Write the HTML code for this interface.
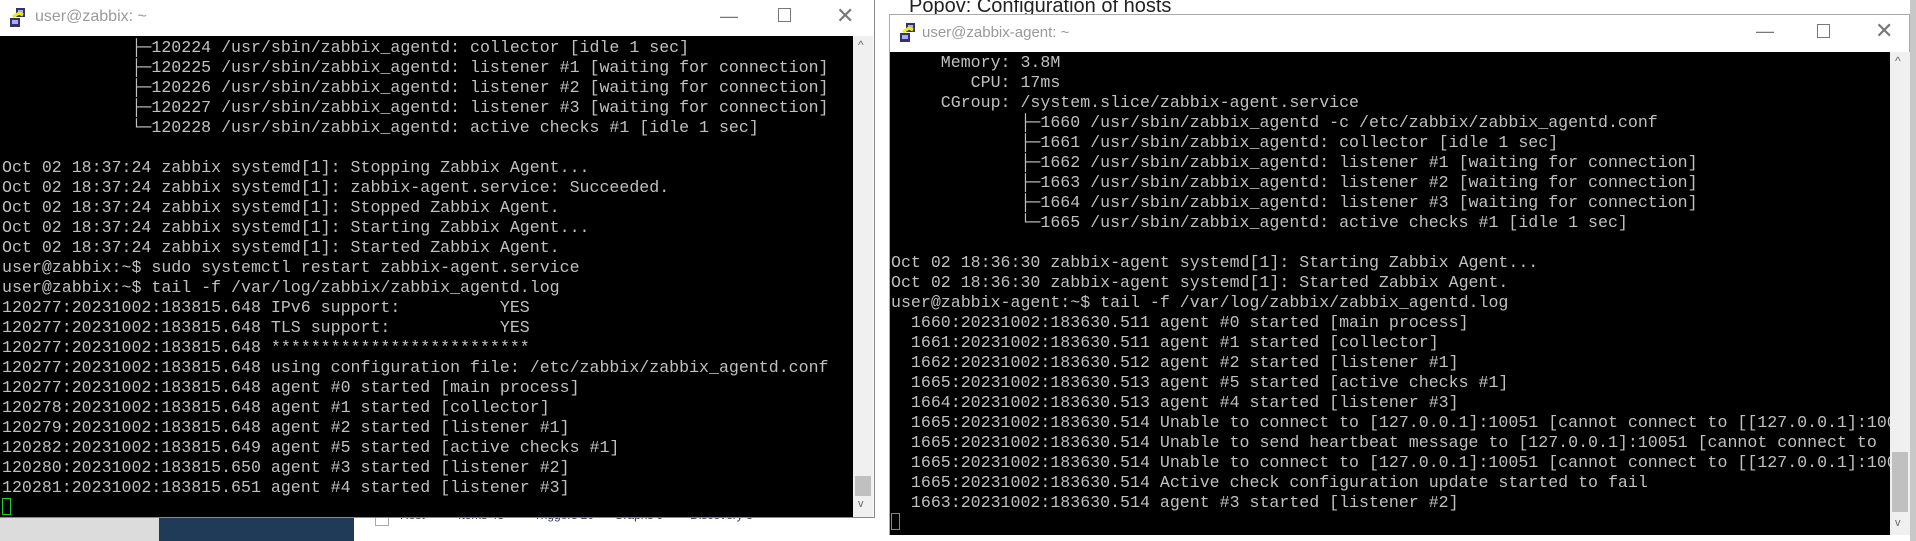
<!DOCTYPE html>
<html><head><meta charset="utf-8"><style>
*{margin:0;padding:0;box-sizing:border-box}
body{width:1916px;height:541px;overflow:hidden;background:#f0f0f0;position:relative;font-family:"Liberation Sans",sans-serif}
.win{position:absolute;background:#fff;border:1px solid #888}
.title{position:absolute;left:0;right:0;top:0;height:36px;background:#fff}
.title .t{position:absolute;left:35px;top:8px;font-size:16px;color:#999}
.icon{position:absolute;left:9px;top:7px;width:20px;height:22px}
.ctl{position:absolute;top:6px;font-size:18px;color:#777}
.term{position:absolute;background:#000;overflow:hidden}
pre{position:absolute;font-family:"Liberation Mono",monospace;font-size:16.6px;line-height:20px;color:#c0c0c0;white-space:pre}
.sb{position:absolute;background:#f0f0f0}
.cur{display:inline-block;width:9px;height:17px;border:1px solid #2c2;vertical-align:-3px}
</style></head><body>
<div style="position:absolute;left:875px;top:0;width:1041px;height:541px;background:#fff"></div>
<div style="position:absolute;left:909px;top:-5px;font-size:20px;color:#222">Popov: Configuration of hosts</div>
<div style="position:absolute;left:1910px;top:0;width:6px;height:541px;background:#c8c8c8"></div>
<div style="position:absolute;left:0;top:517px;width:159px;height:24px;background:#dcdcdc"></div>
<div style="position:absolute;left:159px;top:517px;width:195px;height:24px;background:#1f3b57"></div>
<div style="position:absolute;left:354px;top:517px;width:535px;height:24px;background:#fff"></div>
<div style="position:absolute;left:375px;top:512px;width:14px;height:14px;border:1px solid #aaa;background:#fff"></div>
<div style="position:absolute;left:400px;top:508px;font-size:12px;color:#336;white-space:pre">Host          Items 48         Triggers 20      Graphs 9        Discovery 3</div>

<div class="win" style="left:0;top:0;width:875px;height:518px;border-width:0 1px 1px 0">
 <div class="title">
  <svg class="icon" viewBox="0 0 20 22"><rect x="7" y="1" width="9" height="9" fill="#336" /><rect x="9" y="3" width="5" height="5" fill="#aaf"/><rect x="1" y="11" width="10" height="9" fill="#336"/><rect x="3" y="13" width="6" height="4" fill="#aaf"/><path d="M4 10 L10 6 L14 8" stroke="#ee0" stroke-width="3" fill="none"/></svg>
  <div class="t">user@zabbix: ~</div>
  <div class="ctl" style="left:720px">—</div>
  <div class="ctl" style="left:778px;top:8px;width:13px;height:14px;border:1px solid #777"></div>
  <div class="ctl" style="left:836px;font-size:22px;top:3px">✕</div>
 </div>
 <div class="term" style="left:0;top:36px;width:853px;height:481px">
<pre style="left:2px;top:2px">             ├─120224 /usr/sbin/zabbix_agentd: collector [idle 1 sec]
             ├─120225 /usr/sbin/zabbix_agentd: listener #1 [waiting for connection]
             ├─120226 /usr/sbin/zabbix_agentd: listener #2 [waiting for connection]
             ├─120227 /usr/sbin/zabbix_agentd: listener #3 [waiting for connection]
             └─120228 /usr/sbin/zabbix_agentd: active checks #1 [idle 1 sec]

Oct 02 18:37:24 zabbix systemd[1]: Stopping Zabbix Agent...
Oct 02 18:37:24 zabbix systemd[1]: zabbix-agent.service: Succeeded.
Oct 02 18:37:24 zabbix systemd[1]: Stopped Zabbix Agent.
Oct 02 18:37:24 zabbix systemd[1]: Starting Zabbix Agent...
Oct 02 18:37:24 zabbix systemd[1]: Started Zabbix Agent.
user@zabbix:~$ sudo systemctl restart zabbix-agent.service
user@zabbix:~$ tail -f /var/log/zabbix/zabbix_agentd.log
120277:20231002:183815.648 IPv6 support:          YES
120277:20231002:183815.648 TLS support:           YES
120277:20231002:183815.648 **************************
120277:20231002:183815.648 using configuration file: /etc/zabbix/zabbix_agentd.conf
120277:20231002:183815.648 agent #0 started [main process]
120278:20231002:183815.648 agent #1 started [collector]
120279:20231002:183815.648 agent #2 started [listener #1]
120282:20231002:183815.649 agent #5 started [active checks #1]
120280:20231002:183815.650 agent #3 started [listener #2]
120281:20231002:183815.651 agent #4 started [listener #3]
<span class="cur"></span></pre>
 </div>
 <div class="sb" style="left:853px;top:36px;width:20px;height:481px">
  <div style="position:absolute;left:5px;top:2px;font-size:12px;color:#666">^</div>
  <div style="position:absolute;left:2px;top:440px;width:16px;height:20px;background:#c0c0c0"></div>
  <div style="position:absolute;left:5px;top:462px;font-size:11px;color:#666">v</div>
 </div>
</div>

<div class="win" style="left:889px;top:14px;width:1021px;height:521px;border-color:#aaa">
 <div class="title" style="height:38px">
  <svg class="icon" viewBox="0 0 20 22"><rect x="7" y="1" width="9" height="9" fill="#336" /><rect x="9" y="3" width="5" height="5" fill="#aaf"/><rect x="1" y="11" width="10" height="9" fill="#336"/><rect x="3" y="13" width="6" height="4" fill="#aaf"/><path d="M4 10 L10 6 L14 8" stroke="#ee0" stroke-width="3" fill="none"/></svg>
  <div class="t" style="left:32px;top:9px;font-size:15px">user@zabbix-agent: ~</div>
  <div class="ctl" style="left:866px">—</div>
  <div class="ctl" style="left:927px;top:9px;width:13px;height:14px;border:1px solid #777"></div>
  <div class="ctl" style="left:985px;font-size:22px;top:3px">✕</div>
 </div>
 <div class="term" style="left:0;top:37px;width:1000px;height:483px">
<pre style="left:1px;top:1px">     Memory: 3.8M
        CPU: 17ms
     CGroup: /system.slice/zabbix-agent.service
             ├─1660 /usr/sbin/zabbix_agentd -c /etc/zabbix/zabbix_agentd.conf
             ├─1661 /usr/sbin/zabbix_agentd: collector [idle 1 sec]
             ├─1662 /usr/sbin/zabbix_agentd: listener #1 [waiting for connection]
             ├─1663 /usr/sbin/zabbix_agentd: listener #2 [waiting for connection]
             ├─1664 /usr/sbin/zabbix_agentd: listener #3 [waiting for connection]
             └─1665 /usr/sbin/zabbix_agentd: active checks #1 [idle 1 sec]

Oct 02 18:36:30 zabbix-agent systemd[1]: Starting Zabbix Agent...
Oct 02 18:36:30 zabbix-agent systemd[1]: Started Zabbix Agent.
user@zabbix-agent:~$ tail -f /var/log/zabbix/zabbix_agentd.log
  1660:20231002:183630.511 agent #0 started [main process]
  1661:20231002:183630.511 agent #1 started [collector]
  1662:20231002:183630.512 agent #2 started [listener #1]
  1665:20231002:183630.513 agent #5 started [active checks #1]
  1664:20231002:183630.513 agent #4 started [listener #3]
  1665:20231002:183630.514 Unable to connect to [127.0.0.1]:10051 [cannot connect to [[127.0.0.1]:10051]
  1665:20231002:183630.514 Unable to send heartbeat message to [127.0.0.1]:10051 [cannot connect to [[127.0.0.1]
  1665:20231002:183630.514 Unable to connect to [127.0.0.1]:10051 [cannot connect to [[127.0.0.1]:10051]
  1665:20231002:183630.514 Active check configuration update started to fail
  1663:20231002:183630.514 agent #3 started [listener #2]
<span class="cur"></span></pre>
 </div>
 <div class="sb" style="left:1000px;top:37px;width:20px;height:483px">
  <div style="position:absolute;left:5px;top:2px;font-size:12px;color:#666">^</div>
  <div style="position:absolute;left:2px;top:400px;width:16px;height:60px;background:#c0c0c0"></div>
  <div style="position:absolute;left:5px;top:465px;font-size:11px;color:#666">v</div>
 </div>
</div>
</body></html>
